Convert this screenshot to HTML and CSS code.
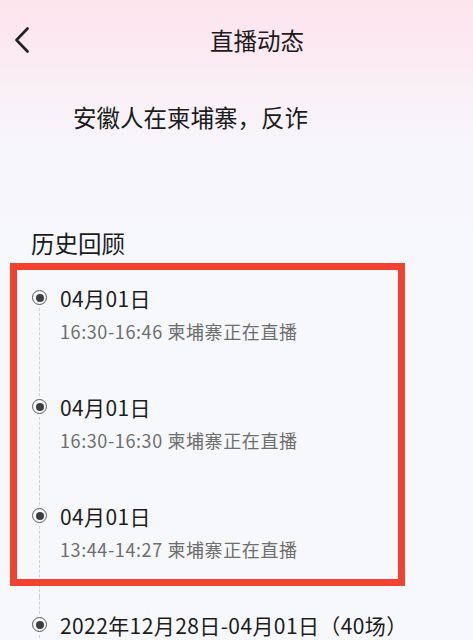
FILE: index.html
```html
<!DOCTYPE html>
<html lang="zh-CN">
<head>
<meta charset="utf-8">
<link rel="stylesheet" href="styles.css">
</head>
<body>
<div class="page">
  <header class="header">
    <svg class="back" width="16" height="26" viewBox="0 0 16 26"><path d="M13.5 1.5 L2.5 13 L13.5 24.5" fill="none" stroke="#222" stroke-width="2.6" stroke-linecap="round" stroke-linejoin="round"/></svg>
    <h1 class="title">直播动态</h1>
  </header>
  <div class="subtitle">安徽人在柬埔寨，反诈</div>
  <div class="section">历史回顾</div>
  <div class="timeline">
    <div class="item first">
      <div class="rail"><span class="seg top"></span><span class="dot"></span><span class="seg bottom"></span></div>
      <div class="body"><div class="date">04月01日</div><div class="time">16:30-16:46 柬埔寨正在直播</div></div>
    </div>
    <div class="item">
      <div class="rail"><span class="seg top"></span><span class="dot"></span><span class="seg bottom"></span></div>
      <div class="body"><div class="date">04月01日</div><div class="time">16:30-16:30 柬埔寨正在直播</div></div>
    </div>
    <div class="item">
      <div class="rail"><span class="seg top"></span><span class="dot"></span><span class="seg bottom"></span></div>
      <div class="body"><div class="date">04月01日</div><div class="time">13:44-14:27 柬埔寨正在直播</div></div>
    </div>
    <div class="item last">
      <div class="rail"><span class="seg top"></span><span class="dot"></span><span class="seg bottom"></span></div>
      <div class="body"><div class="date">2022年12月28日-04月01日（40场）</div></div>
    </div>
    <div class="highlight"></div>
  </div>
</div>
</body>
</html>
```
FILE: styles.css
```css
html, body {
  margin: 0;
  padding: 0;
}
body {
  width: 473px;
  height: 640px;
  overflow: hidden;
  font-family: "Noto Sans CJK SC", "Noto Sans", sans-serif;
  color: #1c1c1c;
  background: linear-gradient(180deg, #fde4ed 0px, #fbe9f1 50px, #f9f1f7 100px, #f7f6fb 150px, #f7f8fc 260px);
}
.page {
  display: flex;
  flex-direction: column;
}
.header {
  height: 80px;
  display: flex;
  align-items: center;
}
.back {
  margin-left: 14px;
  flex: none;
}
.title {
  margin: 0 0 0 180px;
  font-size: 23.5px;
  font-weight: 400;
  line-height: 80px;
}
.subtitle {
  padding-left: 73px;
  margin-top: 20px;
  font-size: 23.5px;
  line-height: 34px;
}
.section {
  padding-left: 31px;
  margin-top: 92px;
  font-size: 23.5px;
  line-height: 34px;
}
.timeline {
  position: relative;
  padding-top: 10px;
}
.item {
  display: flex;
  height: 109px;
  padding-left: 32px;
  box-sizing: border-box;
}
.item.last {
  height: 60px;
}
.rail {
  width: 15px;
  flex: none;
  display: flex;
  flex-direction: column;
  align-items: center;
}
.seg {
  width: 0;
  border-left: 1px dashed #cfcfd4;
}
.seg.top {
  flex: none;
  height: 17px;
  margin-bottom: 3px;
}
.first .seg.top {
  border-left-color: transparent;
}
.seg.bottom {
  flex: 1;
  margin-top: 3px;
}
.dot {
  width: 15px;
  height: 15px;
  box-sizing: border-box;
  border: 1.5px solid #5a5a5a;
  border-radius: 50%;
  flex: none;
  display: flex;
  align-items: center;
  justify-content: center;
}
.dot::after {
  content: "";
  width: 8px;
  height: 8px;
  border-radius: 50%;
  background: #3e3e3e;
}
.body {
  margin-left: 13px;
  padding-top: 14px;
}
.date {
  font-size: 21px;
  line-height: 28px;
  color: #1c1c1c;
  letter-spacing: 0.4px;
}
.time {
  margin-top: 7px;
  font-size: 18px;
  line-height: 24px;
  color: #6e6e6e;
  letter-spacing: 0.6px;
}
.highlight {
  position: absolute;
  left: 10px;
  top: 3px;
  width: 395px;
  height: 323px;
  box-sizing: border-box;
  border: 7px solid #f2412f;
}
```
